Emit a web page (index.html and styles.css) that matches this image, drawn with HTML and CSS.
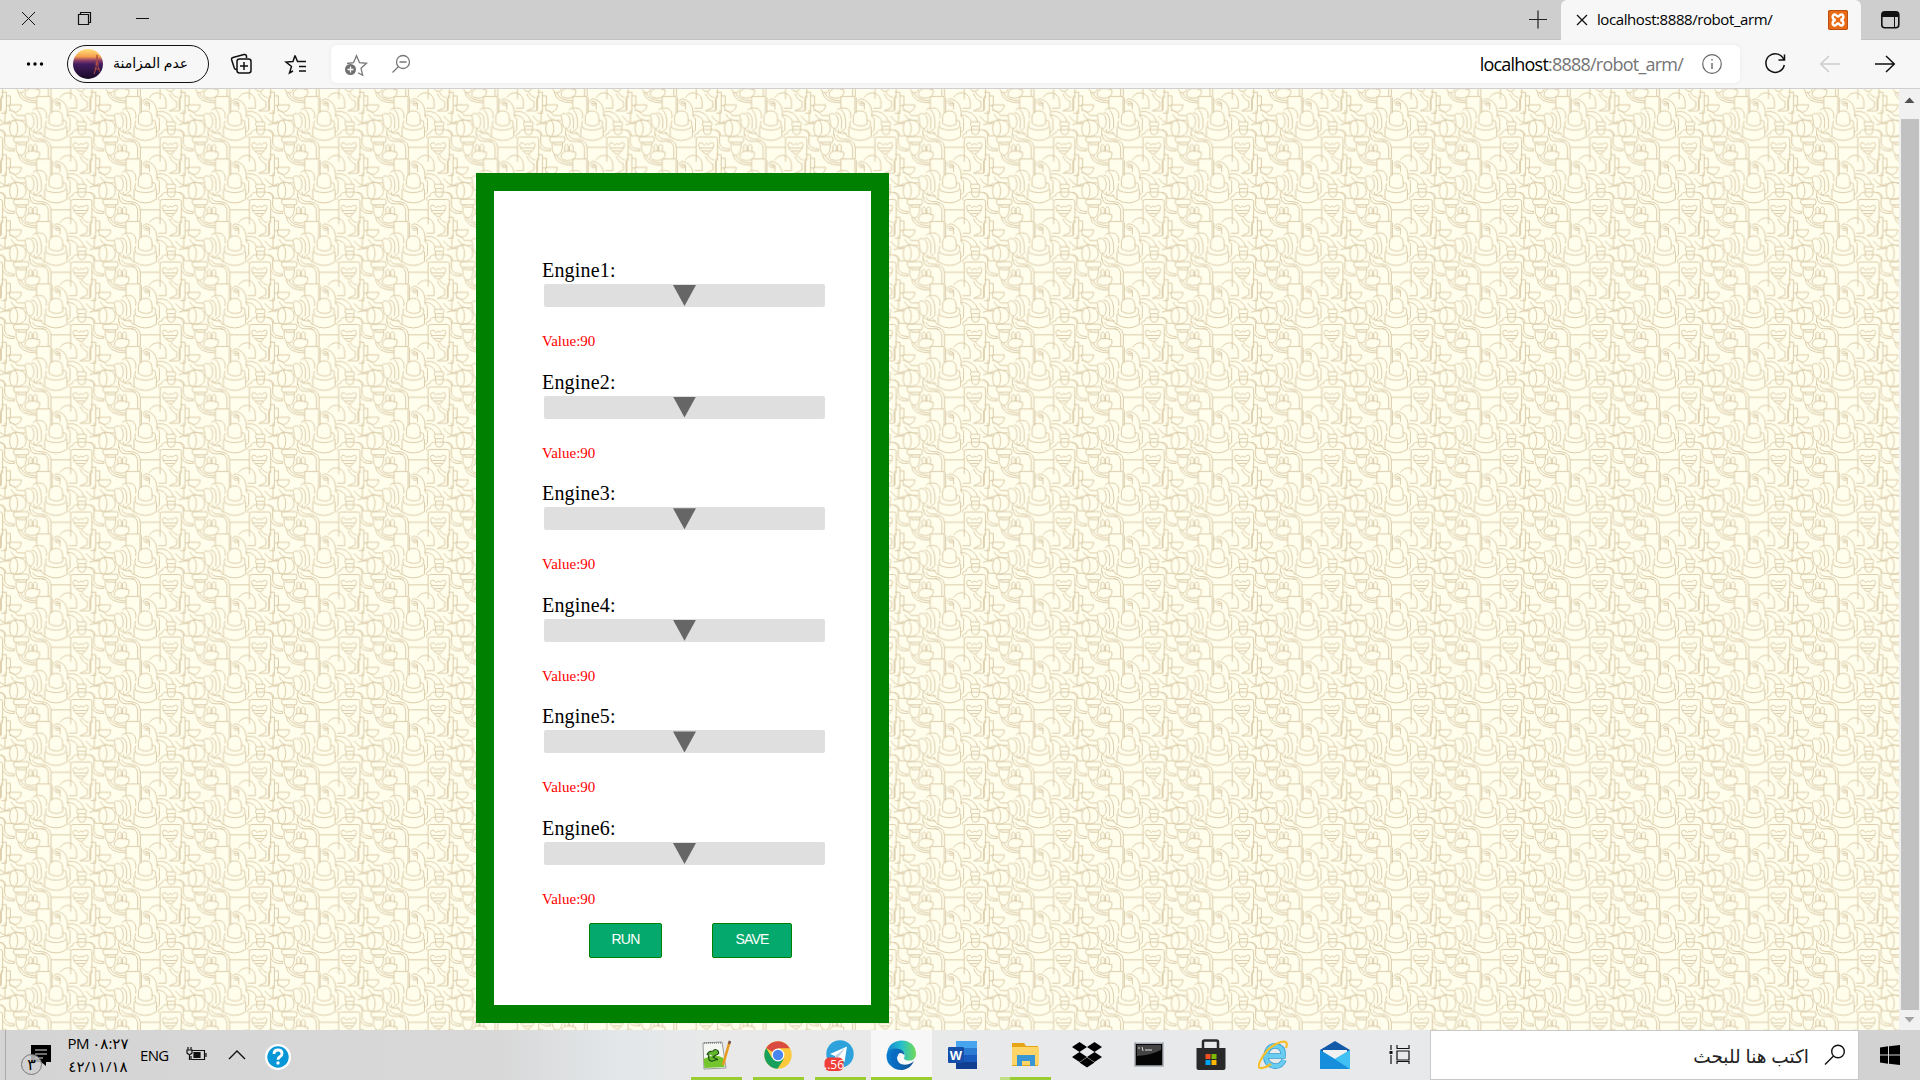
FILE: index.html
```html
<!DOCTYPE html>
<html lang="en">
<head>
<meta charset="utf-8">
<title>localhost:8888/robot_arm/</title>
<link rel="stylesheet" href="styles.css">
</head>
<body>
<div class="screen">
  <header class="titlebar">
    <div class="window-buttons">
      <svg width="190" height="40" viewBox="0 0 190 40" fill="none" stroke="#111"><path d="M22 12l13 13M35 12L22 25M136 18.500h13"/><path d="M78.500 14.500h10v10h-10zM80.500 14v-1.500h10v10H89" stroke-width="1.200"/></svg>
    </div>
    <svg class="newtab" width="32" height="40" viewBox="0 0 32 40" stroke="#222" stroke-width="1.200"><path d="M7 19.500h18M16 10.500v18"/></svg>
    <div class="tab">
      <svg width="12" height="12" viewBox="0 0 12 12" stroke="#111" stroke-width="1.300"><path d="M1 1l10 10M11 1L1 11"/></svg>
      <span class="tab-title">localhost:8888/robot_arm/</span>
      <svg class="favicon" width="20" height="20" viewBox="0 0 20 20"><rect width="20" height="20" rx="2" fill="#e96a15"/><rect x=".5" y=".5" width="19" height="19" rx="1.500" fill="none" stroke="#b94f12"/><path d="M7.500 10C3.500 9 4 4 7 4.500C8.500 4.700 8.500 6.500 10 6.500S11.500 4.700 13 4.500C16 4 16.500 9 12.500 10C16.500 11 16 16 13 15.500C11.500 15.300 11.500 13.500 10 13.500S8.500 15.300 7 15.500C4 16 3.500 11 7.500 10z" fill="none" stroke="#fff" stroke-width="2.400"/></svg>
    </div>
    <svg class="tabmenu" width="59" height="40" viewBox="0 0 59 40"><rect x="20.800" y="11.800" width="17" height="16" rx="3" fill="none" stroke="#111" stroke-width="1.600"/><path d="M21 17v-2q0-3 3-3h11q3 0 3 3v2z" fill="#111"/><path d="M33.500 16v12" stroke="#111"/></svg>
  </header>

  <div class="toolbar">
    <svg class="dots" width="67" height="48" viewBox="0 0 67 48"><circle cx="28.500" cy="24" r="1.700"/><circle cx="35" cy="24" r="1.700"/><circle cx="41.500" cy="24" r="1.700"/></svg>
    <div class="profile">
      <svg width="30" height="30" viewBox="0 0 30 30"><defs><linearGradient id="sunset" x2="0" y2="1"><stop offset="0" stop-color="#ffe27a"/><stop offset=".25" stop-color="#f6a04e"/><stop offset=".38" stop-color="#8f3f68"/><stop offset=".5" stop-color="#421d60"/><stop offset="1" stop-color="#180a24"/></linearGradient></defs><circle cx="15" cy="15" r="15" fill="url(#sunset)"/><path d="M24 6q0 12-3 19M24 6q0 12 3 17M22 15h4M21.500 20h5" fill="none" stroke="#b04d43"/></svg>
      <span>عدم المزامنة</span>
    </div>
    <svg class="tool-icons" width="122" height="48" viewBox="1 0 122 48" fill="none" stroke="#111" stroke-width="1.500"><path d="M38.500 18v-2q-.5-2-2.500-1.500l-11 3q-2 .5-1.300 2.500l2.600 8q.7 2 2.700 1.500"/><rect x="29" y="19" width="14" height="14" rx="2.500"/><path d="M36 22v8M32 26h8M87 15.500l-2 6-7 .5 5.500 4.500-2 6.500 3.500-2M87 15.500l2.500 6M89 21.500h9M91 26.500h7M91 31h7"/></svg>
    <div class="address">
      <svg width="90" height="38" viewBox="0 0 90 38" fill="none" stroke="#777" stroke-width="1.300"><path d="M16 18.500l6.500-.8 3-7 3 7 7 .6-5.500 5 1.700 7-4.700-2.500"/><circle cx="19.500" cy="24.500" r="5.500" fill="#707070" stroke="none"/><path d="M16.500 24.500h6M19.500 21.500v6" stroke="#fff"/><circle cx="72" cy="17" r="6.500"/><path d="M68.500 17h7M67.500 21.500l-6 6"/></svg>
      <span class="url">localhost<span>:8888/robot_arm/</span></span>
      <svg class="info" width="22" height="22" viewBox="0 0 22 22" fill="none" stroke="#666" stroke-width="1.200"><circle cx="11" cy="11" r="9.300"/><path d="M11 10v6M11 6v1.500" stroke-width="1.400"/></svg>
    </div>
    <svg class="nav" width="180" height="48" viewBox="0 0 180 48" fill="none" stroke="#111" stroke-width="1.500"><path d="M44 20a9.300 9.300 0 1 0 .3 5M44.500 14.500V20H38.500"/><path d="M100 24H81M89 16l-8.300 8 8.300 8" stroke="#ccc"/><path d="M135 24h19.500M146 16l8.300 8-8.300 8"/></svg>
  </div>

  <div class="viewport">
    <main class="page">
      <svg class="robots" width="1899" height="941">
        <defs>
          <g id="bot">
            <path d="M147 318V302Q147 280 168 280Q188 280 188 302V320M139 310Q133 320 140 332Q168 344 195 332Q203 320 197 310L188 308M134 327V358Q168 380 201 358V327M147 318Q168 332 188 320"/>
            <path d="M125 370Q165 392 212 378M152 286V237H110V272M156 286V240M160 252Q168 238 182 248Q205 258 203 298Q212 300 210 314V338L201 345M161 258Q170 246 180 256V276"/>
            <ellipse cx="173" cy="260" rx="7" ry="3"/>
            <path d="M180 240Q190 225 207 226Q232 230 230 262V272H207M205 282Q240 276 254 315M200 292Q228 292 234 315"/>
            <rect x="231" y="313" width="28" height="13" rx="4"/>
            <path d="M234 326V342Q236 352 246 352Q257 351 257 340V326M258 295Q285 332 310 308"/>
            <path d="M212 245V178Q212 171 219 171H269Q276 171 276 178V242M240 228Q246 246 262 252V270L240 280H270V242M246 224Q253 238 266 240M212 202H152"/>
            <path d="M219 195Q221 184 231 190Q236 200 242 190Q248 198 254 190Q264 184 265 195Q262 209 255 214Q251 222 242 222Q233 220 230 214Q221 209 219 195M221 204H263M230 213H255"/>
            <path d="M209 174Q203 162 218 160Q218 150 232 149H262Q280 151 282 166V190Q285 206 311 207V213Q282 214 278 198"/>
            <path d="M44 170H84Q90 178 84 187H44Q36 178 44 170ZM48 188V207Q52 226 65 226Q78 222 79 195V188M54 188V194H79"/>
            <path d="M86 215V198Q91 188 96 198V215M100 215V198Q106 188 111 198V218M82 216Q95 209 119 217Q122 242 93 242Q62 238 82 216M62 226Q70 249 110 250M54 223Q60 256 110 256"/>
            <path d="M90 162Q90 184 110 184H128Q143 186 145 206V237M98 164Q99 175 115 177Q151 176 153 203V237M88 150V166M118 342L133 360M88 330Q94 350 127 348"/>
            <path d="M64 262H28Q26 281 46 284Q64 280 64 262ZM4 224H19V287H4M19 235H31V264H19M4 234V278M27 278Q45 279 52 294H74M33 290Q42 312 75 309"/>
            <path d="M77 303Q70 288 85 288Q99 288 102 310Q102 332 91 334Q78 332 77 303M98 278Q107 268 128 273Q143 282 139 303M110 275Q127 290 124 332L106 346Q101 344 102 335M94 285Q118 286 111 334"/>
            <ellipse cx="41" cy="333" rx="12" ry="25"/>
            <path d="M41 308H58Q79 312 78 337Q76 356 46 358M29 318H15V278M0 322Q22 318 31 310M0 337Q17 338 17 355H42"/>
          </g>
          <pattern id="crowd" width="268.080" height="187.500" patternUnits="userSpaceOnUse" patternTransform="translate(0 -9) scale(.33333)">
            <use href="#bot" x="0" y="-187.500"/><use href="#bot" x="0" y="0"/>
            <use href="#bot" x="-268.080" y="-187.500"/><use href="#bot" x="-268.080" y="0"/>
          </pattern>
        </defs>
        <rect width="1899" height="941" fill="url(#crowd)" stroke="none"/>
      </svg>
      <form class="panel">
        <div class="engine"><label>Engine1:</label><div class="slider"><i></i></div><p>Value:90</p></div>
        <div class="engine"><label>Engine2:</label><div class="slider"><i></i></div><p>Value:90</p></div>
        <div class="engine"><label>Engine3:</label><div class="slider"><i></i></div><p>Value:90</p></div>
        <div class="engine"><label>Engine4:</label><div class="slider"><i></i></div><p>Value:90</p></div>
        <div class="engine"><label>Engine5:</label><div class="slider"><i></i></div><p>Value:90</p></div>
        <div class="engine"><label>Engine6:</label><div class="slider"><i></i></div><p>Value:90</p></div>
        <div class="actions"><button type="button" class="run">RUN</button><button type="button" class="save">SAVE</button></div>
      </form>
    </main>
    <div class="scrollbar">
      <svg width="21" height="30" viewBox="0 0 21 30"><path d="M5.500 14h10l-5-5.500z" fill="#505050"/></svg>
      <div class="thumb"></div>
      <svg width="21" height="20" viewBox="0 0 21 20"><path d="M5.500 7h10l-5 5.500z" fill="#a3a3a3"/></svg>
    </div>
  </div>

  <footer class="taskbar">
    <div class="tray">
      <svg class="note" width="60" height="50" viewBox="0 0 60 50"><path d="M5.500 0v50" stroke="#aaa"/><path d="M31 15h20v17h-5v4l-5-4H31z"/><path d="M35 20h12M35 24h12M35 28h8" stroke="#ddd"/><circle cx="31.500" cy="34.500" r="10" fill="#d0d0d0" fill-opacity=".8" stroke="#777"/><text x="31.500" y="40" text-anchor="middle">٣</text></svg>
      <div class="clock"><span class="time">PM ٠٨:٢٧</span><span class="date">٤٢/١١/١٨</span></div>
      <span class="lang">ENG</span>
      <svg class="battery" width="22" height="16" viewBox="0 0 22 16" fill="none" stroke="#111" stroke-width="1.200"><path d="M6 3.500h12.500v9H5V9M20 6v4"/><path d="M8 5.500h6v5H8z" fill="#111"/><path d="M2 0v3M5 0v3M1 3h5v3q-2.500 3-5 0zM3.500 7v6"/></svg>
      <svg class="chevron" width="18" height="12" viewBox="0 0 18 12" fill="none" stroke="#111" stroke-width="1.400"><path d="M1 10l8-8 8 8"/></svg>
      <svg class="help" width="28" height="28" viewBox="0 0 28 28"><circle cx="14" cy="14" r="13" fill="#fff"/><circle cx="14" cy="14" r="10.700" fill="#0797d7"/><path d="M10 11q0-4 4-4t4 3.500q0 2-2 3.200t-2 3" fill="none" stroke="#fff" stroke-width="2.800"/><circle cx="14" cy="20" r="1.700" fill="#fff"/></svg>
    </div>
    <nav class="apps">
      <div class="app open"><svg width="30" height="30" viewBox="0 0 30 30"><path d="M2 3l19-1 4 26-22 1z" fill="#f5f7f3" stroke="#777" stroke-width=".7"/><path d="M2.500 19q11-6 20-1l1 9-20 1z" fill="#75c52c"/><path d="M3 3h18" stroke="#555" stroke-dasharray="1 1"/><path d="M6 15q1-4 6-4 2-3 5 0 2 3-2 4l-3 2 5 3M8 14q-2 8 4 7l5-2" fill="#65b52b" stroke="#184d15" stroke-width="1.200"/><path d="M28.500 2L22 25" stroke="#e69b1c" stroke-width="2.500"/><path d="M29 1l-1 3" stroke="#795548" stroke-width="2.500"/></svg></div>
      <div class="app open"><svg width="30" height="30" viewBox="0 0 30 30"><circle cx="15" cy="15" r="13.700" fill="#fbc93b"/><path d="M15 15L3.200 8A13.700 13.700 0 0 1 26.800 8.200H15z" fill="#d94b40"/><path d="M3.200 8A13.700 13.700 0 0 0 14.500 28.700L21 18.500 15 20 9 18z" fill="#18a05d"/><circle cx="15" cy="15" r="6.400" fill="#fff"/><circle cx="15" cy="15" r="5.200" fill="#4786ef"/></svg></div>
      <div class="app open"><svg width="32" height="32" viewBox="0 0 32 32"><circle cx="16" cy="15" r="13.700" fill="#2da2dc"/><path d="M6 15L23 7.500 20.500 23 15 19l-3 3-1-5z" fill="#fff"/><path d="M11 17l10-8-7 10-2 3z" fill="#b9d5e7"/><rect x=".5" y="18.500" width="19" height="13.500" rx="5" fill="#ef3d38"/><text x="10" y="29.500" class="badge" text-anchor="middle">..56</text></svg></div>
      <div class="app open active"><svg width="31" height="31" viewBox="0 0 31 31"><defs><linearGradient id="edge-a"><stop stop-color="#1686d5"/><stop offset=".5" stop-color="#27bfcb"/><stop offset="1" stop-color="#71dc55"/></linearGradient><linearGradient id="edge-b" x2="1"><stop stop-color="#087cd1"/><stop offset="1" stop-color="#124f91"/></linearGradient></defs><path d="M1 15C1-4 30-4 30 14c0 7-8 8-12 5q2-7-3-8-7-2-14 4z" fill="url(#edge-a)"/><path d="M.6 14Q5 7 13 9q5 1 5.500 6Q13 10 11 17c0 10 12 9 17 4-5 11-17 11-23 5Q0 22 .6 14z" fill="url(#edge-b)"/><path d="M13 9Q3 12 6 22q3 7 11 7-10-7-4-16z" fill="#086ac0"/><path d="M18 15q-5 2-3 7 5 4 13-1-2 3-8 1-5-2-2-7z" fill="#fafafa"/></svg></div>
      <div class="app"><svg width="30" height="30" viewBox="0 0 30 30"><path d="M8 1h21v7H8z" fill="#46a5ee"/><path d="M8 8h21v7H8z" fill="#2c7bd3"/><path d="M8 15h21v7H8z" fill="#185abd"/><path d="M8 22h21v7H8z" fill="#103f91"/><rect y="7" width="16" height="16" rx="1" fill="#164fa9"/><text x="8" y="19.500" text-anchor="middle" class="word">W</text></svg></div>
      <div class="app open folder"><svg width="30" height="30" viewBox="0 0 30 30"><path d="M2 3h12l2 3h12v20H2z" fill="#e5a516"/><path d="M2 7h27v18H2z" fill="#ffd568"/><path d="M7 26V15h18v11h-5v-5h-8v5z" fill="#3996d4"/></svg></div>
      <div class="app"><svg width="30" height="30" viewBox="0 0 30 30"><path d="M7.500 2l7.500 5-7.500 5L0 7zM22.500 2l7.500 5-7.500 5L15 7zM7.500 12l7.500 5-7.500 5L0 17zM22.500 12l7.500 5-7.500 5L15 17zM15 17.500l7.500 5L15 27.500l-7.500-5z"/></svg></div>
      <div class="app"><svg width="30" height="26" viewBox="0 0 30 26"><rect x="1" y="1" width="28" height="23" fill="#050505" stroke="#a5abb1" stroke-width="1.500"/><path d="M2 1h26" stroke="#d5dde4"/><path d="M3 3h24v5Q18 13 3 14z" fill="#444"/><path d="M4 6h2M8 5l1 4M11 8h7" stroke="#ddd"/></svg></div>
      <div class="app"><svg width="30" height="32" viewBox="0 0 30 32"><path d="M7 9V3q0-1.500 1.500-1.500h12Q22 1.500 22 3v6" fill="none" stroke="#292929" stroke-width="2.500"/><path d="M.5 9h29v20q0 2-2 2h-25q-2 0-2-2z" fill="#292929"/><path d="M9.500 15h5v5h-5z" fill="#f25022"/><path d="M15.500 15h5v5h-5z" fill="#7fba00"/><path d="M9.500 21h5v5h-5z" fill="#00a4ef"/><path d="M15.500 21h5v5h-5z" fill="#ffb900"/></svg></div>
      <div class="app"><svg width="30" height="30" viewBox="0 0 30 30" fill="none"><path d="M26 20Q23 27 16 26 7 24 8 15 10 5 18 6q8 1 7 10H10" stroke="#3499d1" stroke-width="5.500"/><path d="M26 20Q23 27 16 26 7 24 8 15 10 5 18 6q8 1 7 10H10" stroke="#69cdf0" stroke-width="4"/><path d="M28 8Q31 0 23 2 12 5 5 16-3 29 4 28q4-.5 9-4" stroke="#f5bf2b" stroke-width="2.200"/></svg></div>
      <div class="app"><svg width="30" height="30" viewBox="0 0 30 30"><path d="M0 10L15 1l15 9v12H0z" fill="#1259a8"/><path d="M3 10h24v13H3z" fill="#f1f1f1"/><path d="M0 10l15 9 15-9v19H0z" fill="#29a9e9"/><path d="M0 10l30 19H0z" fill="#168edc"/><path d="M15 19l15-9v19z" fill="#41c1f3"/></svg></div>
      <div class="app taskview"><svg width="22" height="20" viewBox="0 0 22 20" fill="none" stroke="#111" stroke-width="1.200"><path d="M2 0v5M2 10v9M8 0v3.500h12V0M8 6h12v9H8zM8 19v-2.500h12V19"/><path d="M.5 6h3v3h-3z" fill="#111" stroke="none"/></svg></div>
    </nav>
    <div class="search"><span>اكتب هنا للبحث</span><svg width="22" height="22" viewBox="0 0 22 22" fill="none" stroke="#111" stroke-width="1.400"><circle cx="14" cy="7.500" r="6.300"/><path d="M9.500 12L1 20.500"/></svg></div>
    <div class="start"><svg width="20" height="20" viewBox="0 0 20 20"><path d="M0 2.500L8 1.300V9.500H0zM9 1.200L20 0v9.500H9zM0 10.500h8v8.200L0 17.500zM9 10.500h11V20L9 18.800z"/></svg></div>
  </footer>
</div>
</body>
</html>
```
FILE: styles.css
```css
* { box-sizing: border-box; }
body { margin: 0; }
svg { display: block; flex: none; }
.screen {
  width: 1920px;
  height: 1080px;
  display: flex;
  flex-direction: column;
  overflow: hidden;
  font-family: "Open Sans", "Noto Sans", "DejaVu Sans", sans-serif;
}

/* Browser title bar */
.titlebar { height: 40px; display: flex; background: #cecece; box-shadow: inset 0 -1px #c2c2c2; }
.window-buttons { flex: 1; }
.newtab { margin-right: 7px; }
.tab {
  width: 300px;
  display: flex;
  align-items: center;
  padding: 0 13px 0 15px;
  background: #f7f7f7;
  border-radius: 6px 6px 0 0;
}
.tab-title { flex: 1; margin: -2px 0 0 9px; font-size: 15px; letter-spacing: -.42px; white-space: nowrap; }

/* Browser toolbar */
.toolbar { height: 49px; display: flex; background: #f7f7f7; border-bottom: 1px solid #cfcfd2; }
.profile {
  width: 142px;
  height: 38px;
  margin-top: 5px;
  padding: 0 5px;
  display: flex;
  align-items: center;
  gap: 10px;
  border: 1.500px solid #111;
  border-radius: 19px;
  font-size: 14px;
  white-space: nowrap;
}
.profile span { margin-top: -3px; letter-spacing: 0; }
.address {
  width: 1409px;
  height: 38px;
  margin-top: 5px;
  display: flex;
  align-items: center;
  background: #fff;
  border-radius: 6px;
  box-shadow: 0 0 5px #e9e9e9;
}
.url { flex: 1; margin-top: -1px; text-align: right; font-size: 18px; letter-spacing: -.78px; }
.url span { color: #757575; }
.info { margin: 0 17px 0 18px; }

/* Page */
.viewport { height: 941px; display: flex; }
.page { width: 1899px; position: relative; background: #fffdeb; padding: 84px 0 0 476px; }
.robots { position: absolute; left: 0; top: 0; fill: none; stroke: #d9caa8; stroke-width: 2.900; }
.panel {
  position: relative;
  width: 413px;
  height: 850px;
  padding: 68px 45px 0 48px;
  background: #fff;
  border: 18px solid #008000;
  font-family: "Liberation Serif", "Times New Roman", serif;
}
.engine { height: 111.600px; }
.engine label { display: block; height: 25px; font-size: 20px; line-height: 23px; letter-spacing: .2px; }
.slider { width: 281px; height: 23px; margin-left: 2px; display: flex; justify-content: center; align-items: center; background: #dfdfdf; border-radius: 2px; }
.slider i { width: 23px; height: 21px; background: #666; clip-path: polygon(0 0, 100% 0, 50% 100%); }
.engine p { margin: 25px 0 0; font-size: 15px; line-height: 18px; color: #f00; }
.actions { display: flex; gap: 50px; padding: 0 0 0 47px; margin-top: -6px; }
.actions button {
  width: 73px;
  height: 35px;
  padding: 0 0 3px;
  border: 1px solid #008000;
  border-radius: 2px;
  background: #04aa6d;
  color: #fff;
  font: 14px "Liberation Sans", Arial, sans-serif;
  letter-spacing: -.8px;
}
.actions .save { width: 80px; }

.scrollbar { width: 21px; background: #f1f1f1; display: flex; flex-direction: column; }
.thumb { flex: 1; margin: 0 1px 0 2px; background: #c1c1c1; }

/* Taskbar */
.taskbar { height: 50px; display: flex; background: linear-gradient(90deg, #d4d4d4 0, #d8d8d8 500px, #e3e7ea 620px, #e9e9e9 720px, #e7e9eb 1420px, #d2d2d2 1860px); }
.tray { width: 685px; display: flex; align-items: center; }
.note text { font: 16px "DejaVu Sans", sans-serif; }
.clock {
  width: 76px;
  height: 50px;
  display: flex;
  flex-direction: column;
  align-items: center;
  justify-content: center;
  font-size: 15px;
  line-height: 23px;
  letter-spacing: -.55px;
  direction: ltr;
  unicode-bidi: bidi-override;
  white-space: nowrap;
}
.date { letter-spacing: -1.900px; }
.lang { width: 46px; margin-left: 4px; font-size: 15px; letter-spacing: -.7px; }
.chevron { margin-left: 20px; }
.help { margin-left: 18px; margin-top: 4px; }
.apps { display: flex; width: 745px; }
.app { width: 62px; height: 50px; flex: none; display: flex; justify-content: center; align-items: center; }
.taskview { padding-left: 5px; }
.open { background: linear-gradient(#9acd32, #9acd32) center bottom / 51px 3px no-repeat; }
.active { width: 61px; background: linear-gradient(#9acd32, #9acd32) center bottom / 61px 3px no-repeat #f7f7f7; }
.folder { background: linear-gradient(90deg, #bfe082 10px, #9acd32 10px) center bottom / 51px 3px no-repeat; }
.badge { font: 12px "Open Sans", sans-serif; fill: #fff; }
.word { font: bold 13px "Liberation Sans", sans-serif; fill: #fff; }
.search {
  width: 429px;
  height: 50px;
  display: flex;
  align-items: center;
  justify-content: flex-end;
  gap: 15px;
  padding-right: 12px;
  background: #fff;
  border: 1px solid #c9c9c9;
  font-size: 18.500px;
  color: #222;
}
.start { flex: 1; display: flex; align-items: center; justify-content: center; }
```
